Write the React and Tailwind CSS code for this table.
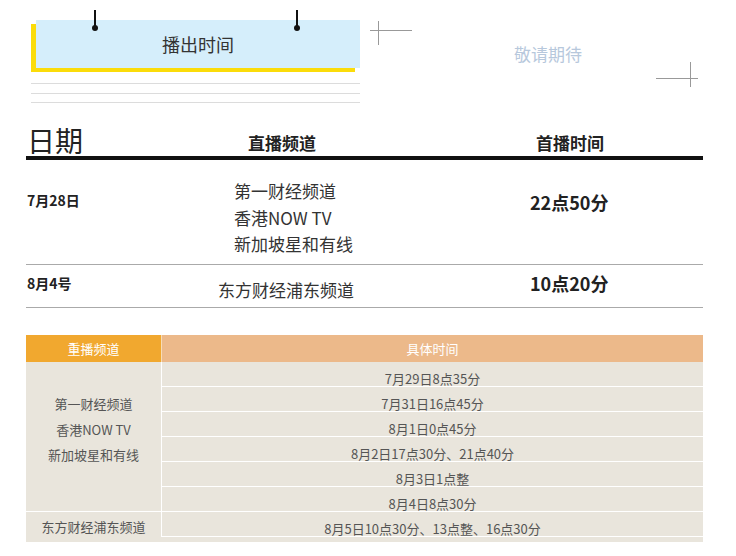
import React from 'react'

const liveRows = [
  {
    date: '7月28日',
    channels: ['第一财经频道', '香港NOW TV', '新加坡星和有线'],
    time: '22点50分',
  },
  {
    date: '8月4号',
    channels: ['东方财经浦东频道'],
    time: '10点20分',
  },
]

const replayTimes = [
  '7月29日8点35分',
  '7月31日16点45分',
  '8月1日0点45分',
  '8月2日17点30分、21点40分',
  '8月3日1点整',
  '8月4日8点30分',
  '8月5日10点30分、13点整、16点30分',
]

const Pin = ({ left }) => (
  <div className="absolute top-[-10px] flex flex-col items-center" style={{ left }}>
    <div className="w-[2px] h-[17px] bg-[#111]" />
    <div className="w-[6px] h-[6px] -mt-[2px] rounded-full bg-[#111]" />
  </div>
)

const Banner = () => (
  <div className="flex">
    <div className="w-[334px]">
      <div className="relative ml-[10px] mt-[20px] w-[324px] h-[48px] bg-[#d5eefb] shadow-[-5px_4px_0_#fbdc0a] flex items-center justify-center">
        <Pin left="56px" />
        <Pin left="258px" />
        <span className="text-[18px] leading-[18px] text-[#333]">播出时间</span>
      </div>
      <div className="ml-[5px] w-[329px] mt-[15px] h-px bg-[#dcdcdc]" />
      <div className="ml-[5px] w-[329px] mt-[9px] h-px bg-[#dcdcdc]" />
      <div className="ml-[5px] w-[329px] mt-[8px] h-px bg-[#dcdcdc]" />
    </div>
    <div className="relative w-[376px] h-[110px] flex items-center justify-center pb-[4px]">
      <svg className="absolute inset-0" width="376" height="110">
        <line x1="10" y1="30.5" x2="52" y2="30.5" stroke="#999" strokeWidth="1" />
        <line x1="18.5" y1="21" x2="18.5" y2="45" stroke="#999" strokeWidth="1" />
        <line x1="296" y1="78.5" x2="338" y2="78.5" stroke="#999" strokeWidth="1" />
        <line x1="330.5" y1="62" x2="330.5" y2="87" stroke="#999" strokeWidth="1" />
      </svg>
      <span className="text-[17px] leading-[17px] text-[#b7c8dc]">敬请期待</span>
    </div>
  </div>
)

const LiveTable = () => (
  <div className="w-[677px]">
    <div className="flex items-end h-[50px] border-b-4 border-[#111] text-[#222]">
      <div className="w-[190px] pl-px pb-[2px] text-[28px] leading-[28px]">日期</div>
      <div className="w-[300px] pl-[32px] pb-[5px] text-[17px] leading-[17px] font-bold">直播频道</div>
      <div className="pl-[20px] pb-[5px] text-[17px] leading-[17px] font-bold">首播时间</div>
    </div>
    {liveRows.map((row, i) => (
      <div
        key={row.date}
        className={
          'flex border-b border-[#aaa] text-[#222] ' + (i === 0 ? 'h-[105px]' : 'h-[43px]')
        }
      >
        <div
          className={
            'w-[190px] pl-px text-[14px] leading-[14px] font-bold ' +
            (i === 0 ? 'pt-[33px]' : 'pt-[11px]')
          }
        >
          {row.date}
        </div>
        <div
          className={
            'w-[300px] text-[17px] text-[#333] ' +
            (i === 0 ? 'pl-[18px] pt-[18px] leading-[26.5px]' : 'pl-[2px] pt-[16px] leading-[17px]')
          }
        >
          {row.channels.map((c) => (
            <div key={c}>{c}</div>
          ))}
        </div>
        <div
          className={
            'pl-[14px] text-[18px] leading-[18px] font-bold ' +
            (i === 0 ? 'pt-[33px]' : 'pt-[9px]')
          }
        >
          {row.time}
        </div>
      </div>
    ))}
  </div>
)

const ReplayTable = () => (
  <div className="w-[677px] mt-[27px] bg-[#e9e5dc] text-[13px] pb-[5px]">
    <div className="flex h-[27px] text-white">
      <div className="w-[136px] bg-[#f1a82f] border-r border-[#f7dcb5] flex items-center justify-center">
        重播频道
      </div>
      <div className="flex-1 bg-[#ecb98a] flex items-center justify-center">具体时间</div>
    </div>
    <div className="flex text-[#555]">
      <div className="w-[136px] border-r border-white">
        <div className="h-[150px] border-b border-white flex flex-col items-center justify-center pb-[14px] leading-[25.5px]">
          <div>第一财经频道</div>
          <div>香港NOW TV</div>
          <div>新加坡星和有线</div>
        </div>
        <div className="h-[25px] flex items-center justify-center pt-[4px]">东方财经浦东频道</div>
      </div>
      <div className="flex-1">
        {replayTimes.map((t) => (
          <div key={t} className="h-[25px] border-b border-white flex items-end justify-center leading-[13px] pb-[1px]">
            {t}
          </div>
        ))}
      </div>
    </div>
  </div>
)

export default function App() {
  return (
    <div className="w-[736px] h-[556px] bg-white overflow-hidden pl-[26px] font-['Noto_Sans_CJK_SC','Noto_Sans',sans-serif]">
      <Banner />
      <LiveTable />
      <ReplayTable />
    </div>
  )
}
